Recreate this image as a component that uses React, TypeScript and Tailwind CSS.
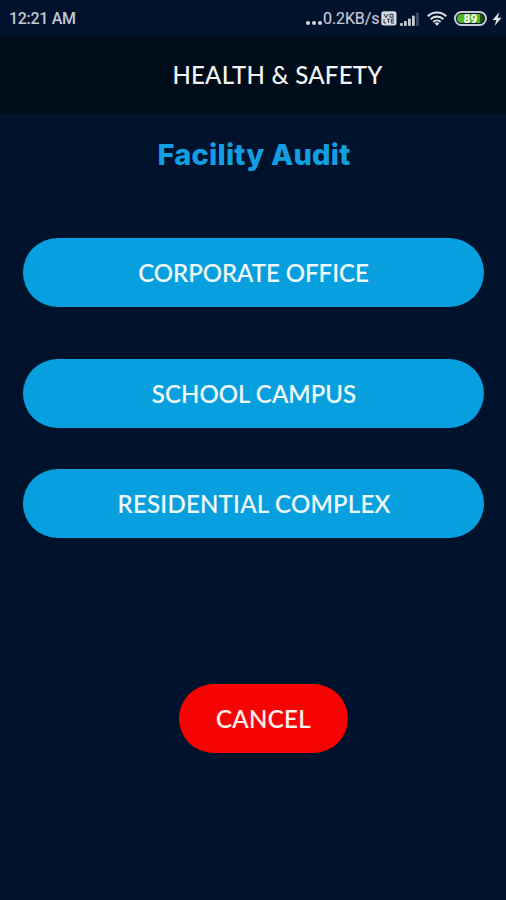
import { clsx } from "clsx";

const facilities = [
  { label: "CORPORATE OFFICE", className: "mt-[71px] pl-[1px] tracking-[-0.02px]" },
  { label: "SCHOOL CAMPUS", className: "mt-[52px] pl-[2px] tracking-[0.05px]" },
  { label: "RESIDENTIAL COMPLEX", className: "mt-[41px] pl-[2px] tracking-[0.25px]" },
];

function VolteIcon() {
  return (
    <svg width="16" height="15" viewBox="0 0 16 15">
      <rect x="0.3" y="0.3" width="15.2" height="14.2" rx="2.5" fill="#d3d7df" />
      <path
        d="M3 3l2 3.6L7 3M9 3.3h3v3H9zM3 8v4h2.2M6 8.2h3M7.5 8.2V12M13 8.2h-2.6V12H13M10.4 10H13"
        fill="none"
        stroke="#303849"
        strokeWidth="1"
      />
    </svg>
  );
}

function SignalIcon() {
  return (
    <svg width="20" height="14" viewBox="0 0 20 14" fill="#c6cbd5">
      <rect x="0" y="11" width="2.8" height="3" rx="1" />
      <rect x="4" y="9" width="2.8" height="5" rx="1" />
      <rect x="8" y="6.5" width="2.8" height="7.5" rx="1" />
      <rect x="12" y="3.5" width="2.8" height="10.5" rx="1" />
      <rect x="16" y="0.5" width="2.8" height="13.5" rx="1" fill="#414b5f" />
    </svg>
  );
}

function WifiIcon() {
  return (
    <svg width="20" height="15" viewBox="0 0 20 15" fill="none" stroke="#dadde3" strokeWidth="2.1">
      <path d="M0.8 5.2a13.2 13.2 0 0 1 18.4 0" />
      <path d="M3.6 8.2a9.2 9.2 0 0 1 12.8 0" />
      <path d="M6.3 11a5.3 5.3 0 0 1 7.4 0" />
      <path d="M7.8 12.4a3 3 0 0 1 4.4 0L10 14.8z" fill="#dadde3" stroke="none" />
    </svg>
  );
}

function BoltIcon() {
  return (
    <svg width="10" height="14" viewBox="0 0 10 14">
      <path d="M7.4 0L0.5 8h3.8L2.6 14L9.5 5.8H5.7z" fill="#dfe2e7" />
    </svg>
  );
}

export default function App() {
  return (
    <div className="flex h-[900px] w-[506px] flex-col items-center overflow-hidden bg-[#01122d] font-['Lato',sans-serif]">
      {/* Status bar */}
      <div className="flex h-[37px] w-full shrink-0 items-center pl-[9px] pr-[4px] font-['Roboto',sans-serif] text-[16px] font-medium text-[#c3c8d3]">
        <span className="tracking-[-0.3px]">12:21 AM</span>
        <div className="ml-auto flex items-center">
          <div className="mt-[8px] flex gap-[2px]">
            <span className="size-[4px] rounded-full bg-[#d6d9e0]" />
            <span className="size-[4px] rounded-full bg-[#d6d9e0]" />
            <span className="size-[4px] rounded-full bg-[#d6d9e0]" />
          </div>
          <span className="ml-[1px] w-[58px] font-normal tracking-[-0.1px] whitespace-nowrap [-webkit-text-stroke:0.2px]">
            0.2KB/s
          </span>
          <VolteIcon />
          <div className="ml-[3px]">
            <SignalIcon />
          </div>
          <div className="ml-[7px]">
            <WifiIcon />
          </div>
          <div className="ml-[7px] flex h-[15px] w-[33px] items-center rounded-full border-2 border-[#c9ced6] p-[1px]">
            <div className="flex h-full w-full items-center justify-center rounded-full bg-linear-to-r from-[#55b51d] from-85% to-[#1c5212] to-85% text-[12px] leading-none font-bold text-white">
              89
            </div>
          </div>
          <div className="ml-[5px]">
            <BoltIcon />
          </div>
        </div>
      </div>

      {/* Title bar */}
      <header className="flex h-[77px] w-full shrink-0 items-center justify-center bg-[#010c1b] pb-[2px] pl-[49px]">
        <h1 className="text-[24px] leading-none font-medium tracking-[0.25px] whitespace-nowrap text-[#f3f5f6]">
          HEALTH &amp; SAFETY
        </h1>
      </header>

      <main className="flex w-full flex-col items-center">
        <h2 className="mt-[23px] h-[30px] pl-[2px] font-['Inter',sans-serif] text-[29px] leading-[36px] font-extrabold tracking-[0.2px] whitespace-nowrap text-[#119fe1]">
          Facility Audit
        </h2>
        {facilities.map(({ label, className }) => (
          <button
            key={label}
            className={clsx(
              "h-[69px] w-[461px] rounded-full bg-[#079fdd] text-[24px] leading-none font-medium whitespace-nowrap text-[#f1fbff] [-webkit-text-stroke:0.15px]",
              className
            )}
          >
            {label}
          </button>
        ))}
        <button className="mt-[146px] ml-[21px] h-[69px] w-[169px] rounded-full bg-[#f60404] text-[24px] leading-none font-medium tracking-[0.35px] text-[#fff2ee] [-webkit-text-stroke:0.15px]">
          CANCEL
        </button>
      </main>
    </div>
  );
}
